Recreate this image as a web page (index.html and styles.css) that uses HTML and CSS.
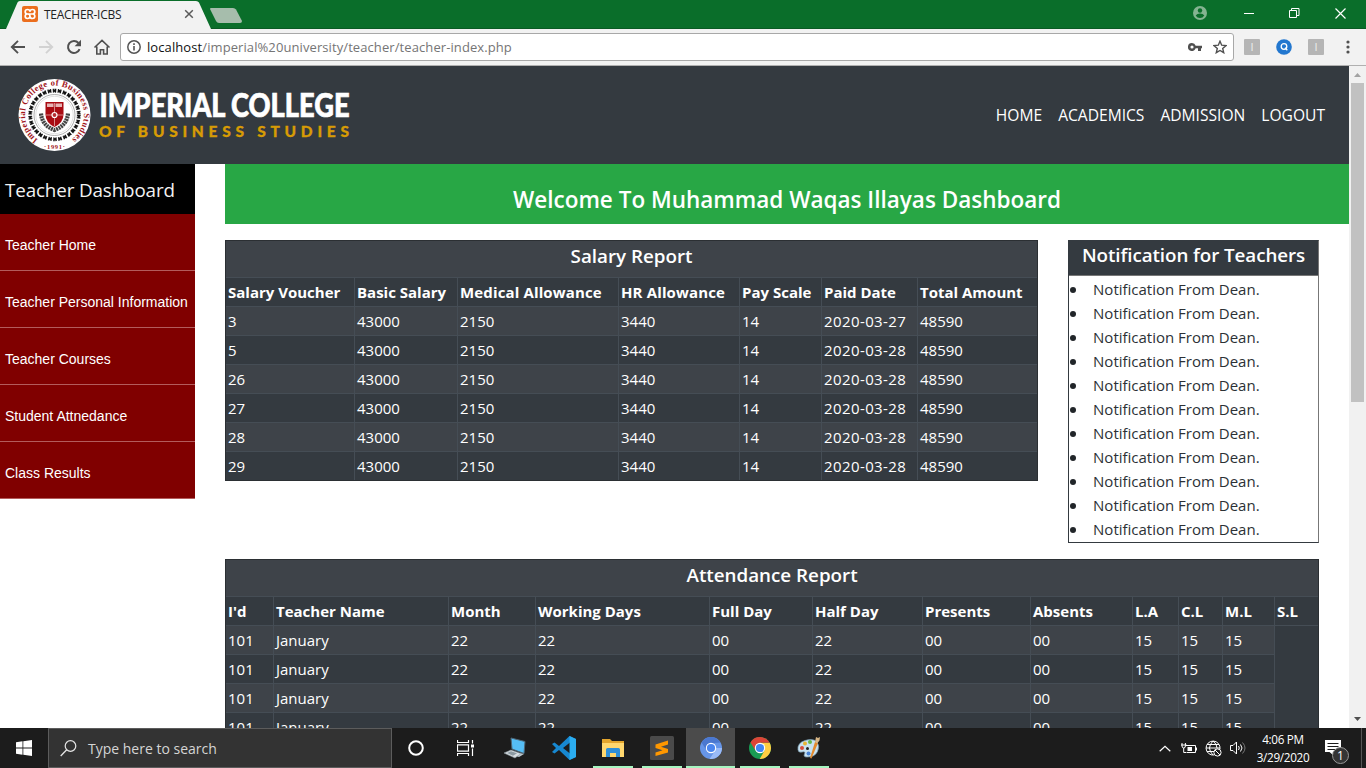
FILE: index.html
```html
<!DOCTYPE html>
<html lang="en">
<head>
<meta charset="utf-8">
<title>TEACHER-ICBS</title>
<link rel="stylesheet" href="styles.css">
</head>
<body>
<div class="screen">
  <div class="titlebar">
    <div class="tab">
      <svg class="tab-shape" width="244" height="29" viewBox="0 0 244 29"><path d="M6 29 L17.500 2.500 Q18 1 20 1 H196 Q198 1 199 2.500 L211 29 Z" fill="#f2f2f2"/><path d="M210 9 Q210 8 211 8 H233 Q235 8 236 9.500 L242 21 Q242 23 240 23 H219 Q217 23 216 21Z" fill="#a6bdac"/></svg>
      <svg class="favicon" width="16" height="16" viewBox="0 0 16 16"><rect width="16" height="16" rx="2" fill="#eb6e1e"/><path d="M8 5.700C8 4 7 3.500 5.500 3.500S3.200 4.300 3.200 5.700 4 8 5.500 8h5c1.500 0 2.300.900 2.300 2.300s-.800 2.200-2.300 2.200S8 12 8 10.300 7 8 5.500 8 3.200 8.900 3.200 10.300s.800 2.200 2.300 2.200S8 12 8 10.300M8 5.700C8 4 9 3.500 10.500 3.500s2.300.8 2.300 2.200S12 8 10.500 8" fill="none" stroke="#fff" stroke-width="1.700"/></svg>
      <span class="tab-title">TEACHER-ICBS</span>
      <svg class="tab-close" width="10" height="10" viewBox="0 0 10 10"><path d="M1.200 1.200 8.800 8.800M8.800 1.200 1.200 8.800" stroke="#5a5a5a" stroke-width="1.500"/></svg>
    </div>
    <div class="window-controls">
      <svg width="14" height="14" viewBox="0 0 14 14"><circle cx="7" cy="7" r="7" fill="#84b491"/><circle cx="7" cy="4.500" r="2.200" fill="#0a6e2a"/><path d="M2.700 9.500q1.300-2 4.300-2t4.300 2q-1.500 2.500-4.300 2.500T2.700 9.500" fill="#0a6e2a"/></svg>
      <svg width="10" height="12" viewBox="0 0 10 12"><path d="M0 6.500h10" stroke="#fff"/></svg>
      <svg width="11" height="11" viewBox="0 0 11 11"><path d="M.5 2.500h7v7h-7zM2.500 2.500V.5h7.500v7H7.500" fill="none" stroke="#fff"/></svg>
      <svg width="11" height="11" viewBox="0 0 11 11"><path d="M.5.5l10 10M10.500.5l-10 10" stroke="#fff" stroke-width="1.200"/></svg>
    </div>
  </div>

  <div class="toolbar">
    <div class="nav-buttons">
      <svg width="16" height="16" viewBox="0 0 16 16"><path d="M15 8H2.500M8 1.800 1.800 8 8 14.200" fill="none" stroke="#505050" stroke-width="1.900"/></svg>
      <svg width="16" height="16" viewBox="0 0 16 16"><path d="M1 8h12.500M8 1.800 14.200 8 8 14.200" fill="none" stroke="#d2d2d2" stroke-width="1.900"/></svg>
      <svg width="16" height="16" viewBox="0 0 16 16"><path d="M13.600 10.200A6 6 0 1 1 12.500 4" fill="none" stroke="#505050" stroke-width="2"/><path d="M15 .8v6.400H8.600Z" fill="#505050"/></svg>
      <svg width="18" height="16" viewBox="0 0 18 16"><path d="M1.500 8.500 9 1.300l7.500 7.200M3.800 7.500V15h3.600v-4.200h3.200V15h3.600V7.500" fill="none" stroke="#505050" stroke-width="1.600"/></svg>
    </div>
    <div class="address">
      <svg width="14" height="14" viewBox="0 0 14 14"><circle cx="7" cy="7" r="6.200" fill="none" stroke="#555" stroke-width="1.500"/><path d="M7 6v4.600M7 3.300v1.700" stroke="#555" stroke-width="1.600"/></svg>
      <span class="url"><b>localhost</b>/imperial%20university/teacher/teacher-index.php</span>
      <svg class="key" width="15" height="8" viewBox="0 0 15 8"><path d="M4 0a4 4 0 1 0 3.700 5.300H10V8h3V5.300h1V2.700H7.700A4 4 0 0 0 4 0m0 2.400a1.600 1.600 0 1 1 0 3.200 1.600 1.600 0 0 1 0-3.200" fill="#505050" fill-rule="evenodd"/></svg>
      <svg width="14" height="14" viewBox="0 0 14 14"><path d="M7 1.200 8.700 5.200l4.300.4-3.300 2.900 1 4.200L7 10.500l-3.700 2.200 1-4.200L1 5.600l4.300-.4Z" fill="none" stroke="#505050" stroke-width="1.400"/></svg>
    </div>
    <div class="extensions">
      <span class="ext">I</span>
      <svg width="16" height="16" viewBox="0 0 16 16"><circle cx="8" cy="8" r="7.800" fill="#2277cf"/><circle cx="8" cy="7.500" r="2.800" fill="none" stroke="#fff" stroke-width="1.300"/><path d="m9 8.700 2.300 2.500" stroke="#fff" stroke-width="1.300"/></svg>
      <span class="ext">I</span>
      <svg class="dots" width="4" height="14" viewBox="0 0 4 14"><g fill="#505050"><circle cx="2" cy="2" r="1.600"/><circle cx="2" cy="7" r="1.600"/><circle cx="2" cy="12" r="1.600"/></g></svg>
    </div>
  </div>

  <div class="viewport">
    <div class="page">
      <header class="site-header">
        <svg class="logo" width="340" height="76" viewBox="0 0 340 76">
          <defs><path id="ringText" d="M20 62.500A29.500 29.500 0 1 1 53 62.500"/></defs>
          <circle cx="36.500" cy="38" r="36" fill="#fff"/>
          <circle cx="36.500" cy="38" r="24.300" fill="none" stroke="#151515" stroke-width="3.800" stroke-dasharray="3.600 1.490"/>
          <circle cx="36.500" cy="38" r="26" fill="none" stroke="#fff" stroke-width="1" stroke-dasharray="1.200 4.245" stroke-dashoffset="-1.300"/>
          <circle cx="36.500" cy="38" r="22.600" fill="none" stroke="#fff" stroke-width="1" stroke-dasharray="1.200 3.530" stroke-dashoffset="-1.100"/>
          <circle cx="36.500" cy="38" r="20.500" fill="none" stroke="#999" stroke-width=".8"/>
          <circle cx="36.500" cy="38" r="18.700" fill="none" stroke="#ccc" stroke-width=".6"/>
          <text class="seal-text"><textPath href="#ringText" textLength="149">Imperial College of Business Studies</textPath></text>
          <text class="seal-year" x="26" y="72" textLength="21">·1991·</text>
          <path d="M23 36.500q1 12 13.500 16.500Q49 48.500 50 36.500" fill="none" stroke="#444" stroke-width="4.200" stroke-dasharray="2 .7"/>
          <path d="M27.500 25h18V37.500q0 8-9 12.500-9-4.500-9-12.500Z" fill="#a90b12"/>
          <path d="M29 26.500h6.500v3.500H29zM37.500 26.500H44v3.500h-6.500z" fill="#e6b5b5"/>
          <path d="M36.500 26v23M28 38h17" stroke="#e3a9a9" stroke-width=".8"/>
          <circle cx="36.500" cy="38" r="2.500" fill="#b62c31" stroke="#fff" stroke-width="1.200"/>
          <text class="brand-main" x="81.500" y="40" textLength="250" lengthAdjust="spacingAndGlyphs">IMPERIAL COLLEGE</text>
          <text class="brand-sub" x="81" y="60" textLength="250">OF BUSINESS STUDIES</text>
        </svg>
        <nav class="site-nav"><a>HOME</a><a>ACADEMICS</a><a>ADMISSION</a><a>LOGOUT</a></nav>
      </header>
      <div class="columns">
        <aside class="sidebar">
          <h2>Teacher Dashboard</h2>
          <a>Teacher Home</a>
          <a>Teacher Personal Information</a>
          <a>Teacher Courses</a>
          <a>Student Attnedance</a>
          <a>Class Results</a>
        </aside>
        <main class="content">
          <h1 class="welcome"><span>Welcome To Muhammad Waqas Illayas Dashboard</span></h1>
          <div class="reports">
            <table class="report salary">
              <colgroup><col class="w129"><col class="w103"><col class="w161"><col class="w121"><col class="w82"><col class="w96"><col class="w119"></colgroup>
              <tr class="caption"><th colspan="7">Salary Report</th></tr>
              <tr><th>Salary Voucher</th><th>Basic Salary</th><th>Medical Allowance</th><th>HR Allowance</th><th>Pay Scale</th><th>Paid Date</th><th>Total Amount</th></tr>
              <tr><td>3</td><td>43000</td><td>2150</td><td>3440</td><td>14</td><td>2020-03-27</td><td>48590</td></tr>
              <tr><td>5</td><td>43000</td><td>2150</td><td>3440</td><td>14</td><td>2020-03-28</td><td>48590</td></tr>
              <tr><td>26</td><td>43000</td><td>2150</td><td>3440</td><td>14</td><td>2020-03-28</td><td>48590</td></tr>
              <tr><td>27</td><td>43000</td><td>2150</td><td>3440</td><td>14</td><td>2020-03-28</td><td>48590</td></tr>
              <tr><td>28</td><td>43000</td><td>2150</td><td>3440</td><td>14</td><td>2020-03-28</td><td>48590</td></tr>
              <tr><td>29</td><td>43000</td><td>2150</td><td>3440</td><td>14</td><td>2020-03-28</td><td>48590</td></tr>
            </table>
            <section class="notices">
              <h3>Notification for Teachers</h3>
              <ul>
                <li>Notification From Dean.</li><li>Notification From Dean.</li><li>Notification From Dean.</li><li>Notification From Dean.</li><li>Notification From Dean.</li><li>Notification From Dean.</li><li>Notification From Dean.</li><li>Notification From Dean.</li><li>Notification From Dean.</li><li>Notification From Dean.</li><li>Notification From Dean.</li>
              </ul>
            </section>
          </div>
          <table class="report attendance">
            <colgroup><col class="w48"><col class="w175"><col class="w87"><col class="w174"><col class="w103"><col class="w110"><col class="w108"><col class="w102"><col class="w46"><col class="w44"><col class="w52"><col class="w43"></colgroup>
            <tr class="caption"><th colspan="12">Attendance Report</th></tr>
            <tr><th>I'd</th><th>Teacher Name</th><th>Month</th><th>Working Days</th><th>Full Day</th><th>Half Day</th><th>Presents</th><th>Absents</th><th>L.A</th><th>C.L</th><th>M.L</th><th>S.L</th></tr>
            <tr><td>101</td><td>January</td><td>22</td><td>22</td><td>00</td><td>22</td><td>00</td><td>00</td><td>15</td><td>15</td><td>15</td></tr>
            <tr><td>101</td><td>January</td><td>22</td><td>22</td><td>00</td><td>22</td><td>00</td><td>00</td><td>15</td><td>15</td><td>15</td></tr>
            <tr><td>101</td><td>January</td><td>22</td><td>22</td><td>00</td><td>22</td><td>00</td><td>00</td><td>15</td><td>15</td><td>15</td></tr>
            <tr><td>101</td><td>January</td><td>22</td><td>22</td><td>00</td><td>22</td><td>00</td><td>00</td><td>15</td><td>15</td><td>15</td></tr>
          </table>
        </main>
      </div>
    </div>
    <div class="scrollbar">
      <svg width="7" height="4" viewBox="0 0 7 4"><path d="M0 4 3.500 0 7 4Z" fill="#a3a3a3"/></svg>
      <div class="thumb"></div>
      <svg width="7" height="4" viewBox="0 0 7 4"><path d="M0 0h7L3.500 4Z" fill="#505050"/></svg>
    </div>
  </div>

  <div class="taskbar">
    <div class="start"><svg width="16" height="16" viewBox="0 0 16 16"><path d="M0 2.300 6.500 1.300V7.500H0ZM7.300 1.200 16 0v7.500H7.300ZM0 8.500h6.500v6.200L0 13.700ZM7.300 8.500H16V16l-8.700-1.200Z" fill="#fff"/></svg></div>
    <div class="search"><svg width="17" height="17" viewBox="0 0 17 17"><circle cx="10.500" cy="6" r="5.300" fill="none" stroke="#e6e6e6" stroke-width="1.200"/><path d="M6.700 9.800.7 16" stroke="#e6e6e6" stroke-width="1.300"/></svg><span>Type here to search</span></div>
    <div class="apps">
      <div class="app"><svg width="16" height="16" viewBox="0 0 16 16"><circle cx="8" cy="8" r="6.800" fill="none" stroke="#fff" stroke-width="2"/></svg></div>
      <div class="app"><svg width="17" height="16" viewBox="0 0 17 16"><path d="M.5 0v2.500h11V0M.5 16v-2.500h11V16M.5 4.800h11v6.400H.5zM15.500 0v3.500M15.500 8.500V16" fill="none" stroke="#fff" stroke-width="1.200"/><path d="M14 4.500h3v3h-3z" fill="#fff"/></svg></div>
      <div class="app"><svg width="24" height="22" viewBox="0 0 24 22"><path d="m8 1 14 3.500-1 12L9 12Z" fill="#55bdf5" stroke="#4d6575"/><path d="m21 17-5 3-3-1 4-3Z" fill="#bbc7ce"/><path d="m1 16 7-3 10 3.500-6 4.500Z" fill="#d9dee1" stroke="#8997a0" stroke-width=".6"/><path d="m4 16 4-1.700 6 2-4 2.400Z" fill="#8d9aa2"/></svg></div>
      <div class="app"><svg width="24" height="24" viewBox="0 0 24 24"><path d="m17.500 0 6.500 3v18l-6.500 3L7 14l-4.500 3.500L0 16l4-4-4-4 2.500-1.500L7 10ZM18 6.500 11 12l7 5.500Z" fill="#1788d1" fill-rule="evenodd"/><path d="m17.500 0 6.500 3v18l-6.500 3Z" fill="#2badf0"/></svg></div>
      <div class="app open"><svg width="22" height="20" viewBox="0 0 22 20"><path d="M0 1h8l2 2h12v16H0Z" fill="#e3a52d"/><path d="M0 5h22v14H0Z" fill="#ffd76e"/><path d="M4 11.500Q4 10 5.500 10h11Q18 10 18 11.500V19h-4v-4H8v4H4Z" fill="#2f8fd8"/></svg></div>
      <div class="app open"><svg width="24" height="24" viewBox="0 0 24 24"><rect width="24" height="24" rx="1.500" fill="#4a4a4a"/><path d="m5.500 8.500 12.500-4v4l-7 2.300 7 2.200v3.500L5.500 20v-3.600l7-2.200-7-2.200Z" fill="#ff9800"/></svg></div>
      <div class="app open active"><svg width="22" height="22" viewBox="0 0 22 22"><circle cx="11" cy="11" r="11" fill="#6695e8"/><path d="M11 11H22A11 11 0 0 1 9.500 21.900L15.300 13.500Z" fill="#9abbf8"/><path d="M1.500 5.500A11 11 0 0 1 20.500 5.500L11 6.200Q7 7 6.700 13.500Z" fill="#4b78d0"/><circle cx="11" cy="11" r="5.200" fill="#fff"/><circle cx="11" cy="11" r="4.100" fill="#4b86ef"/></svg></div>
      <div class="app open"><svg width="22" height="22" viewBox="0 0 22 22"><circle cx="11" cy="11" r="11" fill="#199b54"/><path d="M11 5.800h9.700A11 11 0 0 1 10.700 22L15.500 13.600Z" fill="#ffcd42"/><path d="M1.500 5.500A11 11 0 0 1 20.700 5.800H11Q7 6.500 6.500 13.500Z" fill="#dc4437"/><circle cx="11" cy="11" r="5.200" fill="#fff"/><circle cx="11" cy="11" r="4.100" fill="#4285f4"/></svg></div>
      <div class="app open"><svg width="24" height="24" viewBox="0 0 24 24"><path d="M1 14Q0 7 8 4.500T20 6q3 4 .5 9.500T10 21q-4 0-2.500-3T5 16Q1.500 17 1 14Z" fill="#c8e2f1" stroke="#779bb0" stroke-width=".7"/><circle cx="5" cy="12" r="2" fill="#d84c3b"/><circle cx="8" cy="7.500" r="2" fill="#e7b434"/><circle cx="13" cy="6" r="2" fill="#65b74a"/><circle cx="11.500" cy="17.500" r="2" fill="#4682d4"/><circle cx="10.500" cy="12.500" r="1.500" fill="#222"/><path d="m13 22 5-16 3 1-6.500 15.500Z" fill="#e38a2d"/><path d="m18 6 1-5 2 1 2-1-.5 3.500-2 2.500Z" fill="#d7b686"/></svg></div>
    </div>
    <div class="tray">
      <svg width="12" height="7" viewBox="0 0 12 7"><path d="m.7 6.300 5.300-5 5.300 5" fill="none" stroke="#fff" stroke-width="1.200"/></svg>
      <svg class="battery" width="16" height="12" viewBox="0 0 16 12"><path d="M5 3.500h9.500v7h-9M15.500 5.500v3M1 1v3q0 2 1.700 2T4.400 4V1M0 3h5.500M2.700 6v4.500H5" fill="none" stroke="#fff"/><path d="M6.500 5H11v4H6.500z" fill="#fff"/></svg>
      <svg width="17" height="17" viewBox="0 0 17 17"><g fill="none" stroke="#fff"><path d="M9 15a7 7 0 1 1 6-6M8 1Q1 8 8 15M8 1q4 3 4 7M2 4.500h12M1 8h14M2 11.500h7"/><circle cx="12.500" cy="12.500" r="3.600" fill="#1c1c1c"/><path d="m10 10 5 5"/></g></svg>
      <svg width="16" height="14" viewBox="0 0 16 14"><path d="M.5 4.500H3L6.500 1v12L3 9.500H.5ZM8.500 5q1.500 2 0 4M10.500 3.500q3 3.500 0 7" fill="none" stroke="#fff"/><path d="M12.500 1.500q5 5.500 0 11" fill="none" stroke="#777"/></svg>
      <div class="clock"><span>4:06 PM</span><span>3/29/2020</span></div>
      <svg class="action-center" width="26" height="26" viewBox="0 0 26 26"><path d="M1 1h16v12H9v3l-3.500-3H1Z" fill="#fff"/><path d="M3.500 4.500h11M3.500 7.500h11M3.500 10.500h8" stroke="#1c1c1c"/><circle cx="16.500" cy="16.500" r="8" fill="#353535" stroke="#999"/><text class="badge" x="16.500" y="20.500" text-anchor="middle">1</text></svg>
      <div class="peek"></div>
    </div>
  </div>
</div>
</body>
</html>
```
FILE: styles.css
```css
* { box-sizing: border-box; }
body { margin: 0; font-family: "Open Sans", "Noto Sans", sans-serif; overflow: hidden; }
svg { display: block; flex: none; }
.screen { width: 1366px; height: 768px; display: flex; flex-direction: column; }

/* browser frame */
.titlebar { height: 29px; flex: none; background: #0a6e2a; display: flex; justify-content: space-between; align-items: center; border-bottom: 1px solid #0a5a24; }
.tab { position: relative; height: 29px; display: flex; align-items: center; padding-left: 22px; width: 250px; }
.tab-shape { position: absolute; left: 0; top: 0; }
.favicon, .tab-title, .tab-close { position: relative; }
.tab-title { font-size: 12px; letter-spacing: -0.27px; color: #222; margin-left: 6px; width: 140px; white-space: nowrap; }
.window-controls { display: flex; align-items: center; padding: 0 20px 2px 0; }
.window-controls svg { margin-left: 35px; }
.window-controls svg:nth-child(2) { margin-left: 37px; }
.toolbar { height: 37px; flex: none; background: #f2f2f2; border-bottom: 1px solid #b0b0b0; display: flex; align-items: center; }
.nav-buttons { display: flex; align-items: center; gap: 12px; padding-left: 10px; width: 120px; }
.nav-buttons svg:last-child { margin-left: -1px; }
.address { width: 1114px; height: 28px; border: 1px solid #a8a8a8; border-radius: 3px; background: #fff; display: flex; align-items: center; padding: 0 6px; }
.url { margin-left: 6px; font-size: 13px; color: #757575; white-space: nowrap; flex: 1; letter-spacing: 0.09px; }
.url b { font-weight: 400; color: #111; }
.key { margin-right: 10px; }
.extensions { display: flex; align-items: center; padding-left: 10px; gap: 16px; }
.ext { width: 16px; height: 16px; background: #b5b5b5; border-radius: 1px; color: #eee; font-size: 11px; line-height: 16px; text-align: center; }
.dots { margin-left: 6px; }

/* visible part of the page */
.viewport { flex: 1; min-height: 0; display: flex; overflow: hidden; }
.page { width: 1349px; background: #fff; overflow: hidden; }
.scrollbar { width: 17px; background: #f1f1f1; display: flex; flex-direction: column; align-items: center; padding: 7px 0; }
.thumb { width: 13px; height: 319px; margin: 6px 0 auto; background: #c1c1c1; }
.site-header { height: 98px; background: #343a40; display: flex; justify-content: space-between; align-items: center; padding: 0 24px 0 18px; }
.logo { overflow: visible; }
.brand-main { font: 900 32.500px Lato, sans-serif; fill: #fff; stroke: #fff; stroke-width: 0.7px; }
.brand-sub { font: 900 15.500px Lato, sans-serif; fill: #d79b05; stroke: #d79b05; stroke-width: 0.3px; }
.seal-text { font: bold 8.700px "Liberation Serif", serif; fill: #a2151c; }
.seal-year { font: bold 6.500px "Liberation Serif", serif; fill: #a2151c; }
.site-nav { display: flex; gap: 16px; color: #fff; font-size: 15.600px; }
.columns { display: flex; gap: 30px; align-items: flex-start; }
.sidebar { width: 195px; flex: none; background: #800000; }
.sidebar h2 { margin: 0; height: 50px; line-height: 53px; padding-left: 5px; background: #000; color: #f2f2f2; font-weight: 400; font-size: 18.800px; letter-spacing: -0.12px; white-space: nowrap; }
.sidebar a { display: block; height: 57px; padding-left: 5px; border-bottom: 1px solid #b35c5c; color: #fff; font: 14px/62px "Liberation Sans", Arial, sans-serif; white-space: nowrap; }
.content { width: 1124px; }
.welcome { margin: 0; height: 60px; background: #28a745; color: #fff; font-size: 22.500px; font-weight: 600; line-height: 71px; text-align: center; white-space: nowrap; }
.reports { display: flex; gap: 30px; align-items: flex-start; padding-top: 16px; height: 335px; }

.report { table-layout: fixed; border-collapse: separate; border-spacing: 0; border: 1px solid #2b2f33; background: #343a40; color: #fff; font-size: 15px; }
.salary { width: 813px; }
.attendance { width: 1094px; }
.report th, .report td { height: 29px; padding: 0 0 0 2px; border-right: 1px solid #454d55; border-bottom: 1px solid #454d55; text-align: left; line-height: 28px; white-space: nowrap; }
.report tr:nth-child(odd) th, .report tr:nth-child(odd) td { background: #3e4349; }
.report tr > :nth-child(12), .salary tr > :nth-child(7), .report .caption th { border-right: 0; }
.report .caption th { height: 37px; padding: 0 0 6px; line-height: 30px; text-align: center; font-size: 18.800px; font-weight: 600; }
.salary tr:last-child td { height: 28px; border-bottom: 0; }
.salary td:nth-child(6) { letter-spacing: 0.4px; }
.salary th:nth-child(3), .salary th:nth-child(4) { letter-spacing: 0.14px; }
.w129 { width: 129px; } .w103 { width: 103px; } .w161 { width: 161px; } .w121 { width: 121px; } .w82 { width: 82px; } .w96 { width: 96px; } .w119 { width: 119px; }
.w48 { width: 48px; } .w175 { width: 175px; } .w87 { width: 87px; } .w174 { width: 174px; } .w110 { width: 110px; } .w108 { width: 108px; } .w102 { width: 102px; } .w46 { width: 46px; } .w44 { width: 44px; } .w52 { width: 52px; } .w43 { width: 43px; }

.notices { width: 251px; height: 303px; border: 1px solid #343a40; border-right-color: #777; }
.notices h3 { margin: 0; height: 35px; background: #343a40; border-bottom: 1px solid #777; color: #fff; font-size: 18.800px; font-weight: 600; letter-spacing: -0.07px; line-height: 29px; text-align: center; white-space: nowrap; }
.notices ul { margin: 1px 0 0; padding: 0; list-style: none; }
.notices li { display: flex; align-items: center; height: 24px; font-size: 15px; color: #2c3136; white-space: nowrap; }
.notices li::before { content: ""; width: 6px; height: 6px; border-radius: 50%; background: #212529; margin: 2px 17px 0 1px; }

/* taskbar */
.taskbar { height: 40px; flex: none; background: #1c1c1c; display: flex; }
.start { width: 48px; display: flex; align-items: center; justify-content: center; }
.search { width: 344px; background: #333; border: 1px solid #5c5c5c; display: flex; align-items: center; padding-left: 11px; gap: 11px; color: #d5d5d5; font-size: 14px; white-space: nowrap; }
.apps { display: flex; }
.app { width: 49px; height: 40px; display: flex; align-items: center; justify-content: center; }
.app:first-child { padding-right: 2px; }
.open { background: linear-gradient(#a6f5c0, #a6f5c0) center bottom / 40px 2px no-repeat; }
.active { background-color: #4b4b4b; background-size: 49px 2px; }
.tray { margin-left: auto; display: flex; align-items: center; color: #fff; }
.tray > svg { margin-right: 8px; }
.tray > .battery { margin-left: 2px; }
.clock { width: 58px; margin: 0 12px 0 0; display: flex; flex-direction: column; align-items: center; font-size: 11.700px; line-height: 18px; letter-spacing: -0.3px; white-space: nowrap; }
.tray > .action-center { margin: 8px 6px 0 0; }
.badge { font: 12px "Open Sans", sans-serif; fill: #fff; }
.peek { width: 5px; height: 40px; margin-left: 5px; border-left: 1px solid #555; }
```
